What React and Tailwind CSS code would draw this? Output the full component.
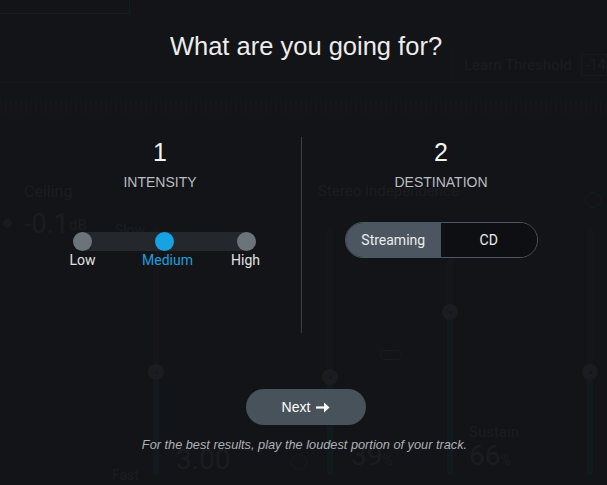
import { useState } from 'react'

const LEVELS = ['Low', 'Medium', 'High']
const DESTS = ['Streaming', 'CD']

// faint vertical fader that sits behind the overlay
function Fader({ knob }) {
  return (
    <div className="flex flex-col items-center w-[16px] h-full pt-[96px] pb-[10px] shrink-0">
      <div className="w-[6px] bg-[#18191d] rounded-t-full" style={{ height: knob }} />
      <div className="w-[16px] h-[16px] rounded-full bg-[#222428] flex items-center justify-center shrink-0">
        <div className="w-[3px] h-[3px] rounded-full bg-[#16181b]" />
      </div>
      <div className="w-[6px] flex-1 rounded-b-full bg-[#0f2126]" />
    </div>
  )
}

function Background() {
  return (
    <div className="w-full h-full flex flex-col text-[#222428]" style={{ fontFamily: 'Roboto, sans-serif' }}>
      {/* top strip */}
      <div className="h-[14px] flex">
        <div className="w-[130px] border-r border-b border-[#16262b]" />
      </div>
      {/* learn threshold row */}
      <div className="h-[69px] flex items-end justify-end border-b border-[#171b1f]">
        <div className="w-[130px] h-[34px] border-l border-[#18191c] flex items-center pl-[12px] text-[15px]">Learn Threshold</div>
        <div className="w-[26px] h-[22px] mb-[6px] border border-[#1c1e22] text-[15px] pl-[3px] leading-[20px]">-14</div>
      </div>
      {/* waveform strip */}
      <div className="h-[47px] flex items-center">
        <div className="w-full h-[14px] bg-[repeating-linear-gradient(90deg,#18191d_0px,#18191d_2px,#141519_2px,#141519_5px)]" />
      </div>
      {/* modules */}
      <div className="h-[355px] flex">
        <div className="w-[148px] flex flex-col pt-[53px] pl-[3px]">
          <div className="pl-[21px] text-[16px] leading-[18px]">Ceiling</div>
          <div className="flex items-center mt-[5px]">
            <div className="w-[9px] h-[9px] rounded-full bg-[#1f2125]" />
            <span className="ml-[12px] text-[27px] leading-[28px]">-0.1</span>
            <span className="text-[15px] mt-[4px]">dB</span>
            <span className="ml-auto mr-[3px] mt-[14px] text-[14px]">Slow</span>
          </div>
          <div className="mt-auto pl-[109px] text-[14px] leading-[16px] mb-[2px]">Fast</div>
        </div>
        <Fader knob={138} />
        <div className="w-[158px] flex items-end pb-[10px] pl-[12px] gap-[60px]">
          <span className="text-[28px] leading-[30px]">3.00</span>
          <div className="w-[16px] h-[16px] mb-[5px] rounded-full border-[1.5px] border-[#1f2125]" />
        </div>
        <div className="flex-1 flex flex-col">
          <div className="h-[96px] flex items-start justify-between pt-[52px] -ml-[4px] pr-[6px]">
            <span className="text-[15px] leading-[18px]">Stereo Independence</span>
            <div className="w-[16px] h-[16px] mt-[10px] rounded-full border-[1.5px] border-[#14262b]" />
          </div>
          <div className="flex-1 flex -mt-[96px]">
            <Fader knob={143} />
            <div className="w-[104px] flex flex-col pl-[13px] pb-[10px]">
              <div className="mt-[220px] ml-[29px] w-[22px] h-[10px] rounded-full border-[1.5px] border-[#1f2125]" />
              <span className="mt-auto text-[28px] leading-[30px]">39<span className="text-[14px]">%</span></span>
            </div>
            <Fader knob={78} />
            <div className="w-[124px] flex flex-col justify-end pl-[11px] pb-[10px]">
              <span className="text-[15px] leading-[18px]">Sustain</span>
              <span className="text-[28px] leading-[30px]">66<span className="text-[14px]">%</span></span>
            </div>
            <Fader knob={138} />
          </div>
        </div>
      </div>
    </div>
  )
}

export default function App() {
  const [level, setLevel] = useState('Medium')
  const [dest, setDest] = useState('Streaming')

  return (
    <div className="relative w-[607px] h-[485px] overflow-hidden bg-[#131418]">
      <Background />

      {/* overlay */}
      <div className="absolute inset-0 bg-[#131418]/45 flex flex-col items-center" style={{ fontFamily: 'Roboto, sans-serif' }}>
        <h1 className="mt-[29px] ml-[5px] text-[25.5px] leading-[34px] text-[#ececec]" style={{ fontFamily: '"Liberation Sans", Arial, sans-serif' }}>
          What are you going for?
        </h1>

        <div className="mt-[74px] w-[560px] -ml-[6px] grid grid-cols-2">
          {/* intensity */}
          <div className="flex flex-col items-center h-[196px] pr-[1px]">
            <div className="mt-[2px] text-[25px] leading-[27px] text-[#f2f2f2]" style={{ fontFamily: '"Liberation Sans", sans-serif' }}>1</div>
            <div className="mt-[8px] text-[14px] leading-[16px] text-[#b9bcc0]" style={{ fontFamily: '"Liberation Sans", sans-serif' }}>INTENSITY</div>
            <div className="mt-[42px] w-[207px] ml-[8px] flex flex-col">
              <div className="relative mx-[12px] h-[19px] flex items-center">
                <div className="absolute left-0 right-0 h-[19px] bg-[#24272b] rounded-full" />
                <div className="relative w-full flex justify-between">
                  {LEVELS.map((l) => (
                    <button
                      key={l}
                      onClick={() => setLevel(l)}
                      className={`w-[19px] h-[19px] rounded-full ${level === l ? 'bg-[#17a3e1]' : 'bg-[#6b737b]'}`}
                    />
                  ))}
                </div>
              </div>
              <div className="flex justify-between text-[14px] leading-[18px]">
                {LEVELS.map((l) => (
                  <span key={l} className={`w-[44px] text-center ${level === l ? 'text-[#1aa0de]' : 'text-[#e2e2e2]'}`}>{l}</span>
                ))}
              </div>
            </div>
          </div>

          {/* destination */}
          <div className="flex flex-col items-center h-[196px] border-l border-[#3b3e43]">
            <div className="mt-[2px] text-[25px] leading-[27px] text-[#f2f2f2]" style={{ fontFamily: '"Liberation Sans", sans-serif' }}>2</div>
            <div className="mt-[8px] text-[14px] leading-[16px] text-[#b9bcc0]" style={{ fontFamily: '"Liberation Sans", sans-serif' }}>DESTINATION</div>
            <div className="mt-[32px] flex w-[193px] h-[36px] rounded-full border-[1.5px] border-[#4b5661] overflow-hidden text-[14px]">
              {DESTS.map((d) => (
                <button
                  key={d}
                  onClick={() => setDest(d)}
                  className={`flex-1 flex items-center justify-center ${dest === d ? 'bg-[#4b5661] text-[#ececec]' : 'bg-[#0e0f12] text-[#ececec]'}`}
                >
                  {d}
                </button>
              ))}
            </div>
          </div>
        </div>

        <button className="mt-[56px] ml-[5px] w-[120px] h-[36px] rounded-full bg-[#48525b] text-white text-[14px] flex items-center justify-center gap-[6px]" style={{ fontFamily: '"Liberation Sans", sans-serif' }}>
          Next
          <svg width="14" height="11" viewBox="0 0 14 11" fill="none">
            <path d="M0 5.5h9" stroke="white" strokeWidth="2.2" />
            <path d="M8 0.5l5.5 5-5.5 5z" fill="white" />
          </svg>
        </button>

        <p className="mt-[10px] ml-[2px] text-[12.75px] italic text-[#aeb1b5]" style={{ fontFamily: '"Liberation Sans", Arial, sans-serif' }}>
          For the best results, play the loudest portion of your track.
        </p>
      </div>
    </div>
  )
}
